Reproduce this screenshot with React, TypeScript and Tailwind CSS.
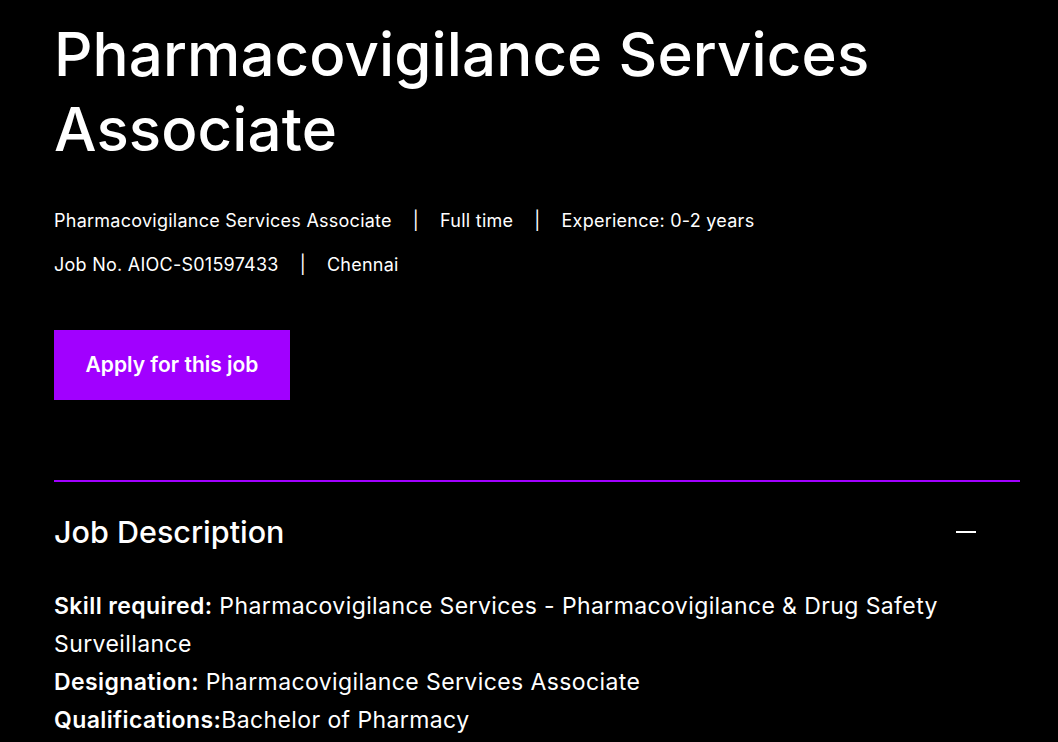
export default function App() {
  return (
    <div className="min-h-screen bg-black text-white font-['Inter',sans-serif] pl-[54px] pr-[38px]">
      <h1 className="pt-[17px] text-[60px] leading-[75px] font-medium tracking-[0.1px]">
        Pharmacovigilance Services
        <br />
        Associate
      </h1>

      {/* meta info */}
      <div className="mt-[41px] flex flex-col gap-[18px] text-[18px] leading-[26px] tracking-[0.25px]">
        <div className="flex items-center">
          <span>Pharmacovigilance Services Associate</span>
          <span className="px-[21px]">|</span>
          <span>Full time</span>
          <span className="px-[21px]">|</span>
          <span>Experience: 0-2 years</span>
        </div>
        <div className="flex items-center">
          <span>Job No. AIOC-S01597433</span>
          <span className="px-[21px]">|</span>
          <span>Chennai</span>
        </div>
      </div>

      <button className="mt-[52px] w-[236px] h-[70px] bg-[#a100ff] text-[21px] font-semibold">
        Apply for this job
      </button>

      <div className="mt-[80px] border-t-2 border-[#a100ff]" />

      <div className="flex items-center justify-between pt-[30px] pr-[44px]">
        <h2 className="text-[30.5px] leading-[40px] font-medium">Job Description</h2>
        <span className="block w-[20px] h-[2px] bg-white" />
      </div>

      <div className="mt-[35px] text-[23px] leading-[38px] tracking-[0.4px] pr-[60px]">
        <p>
          <b className="font-semibold">Skill required:</b> Pharmacovigilance Services - Pharmacovigilance &amp; Drug Safety
          Surveillance
        </p>
        <p>
          <b className="font-semibold">Designation:</b> Pharmacovigilance Services Associate
        </p>
        <p>
          <b className="font-semibold">Qualifications:</b>Bachelor of Pharmacy
        </p>
      </div>
    </div>
  );
}
